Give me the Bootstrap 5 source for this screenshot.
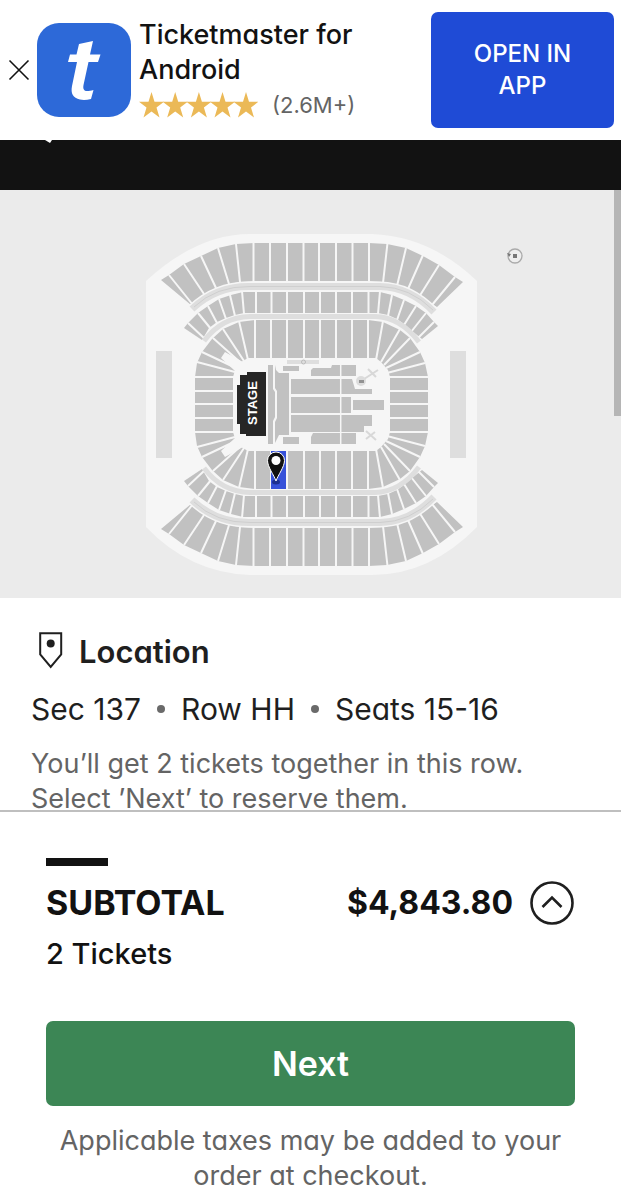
<!DOCTYPE html>
<html lang="en">
<head>
<meta charset="utf-8">
<meta name="viewport" content="width=device-width, initial-scale=1">
<title>Ticketmaster – Location</title>
<link href="https://cdn.jsdelivr.net/npm/bootstrap@5.3.0/dist/css/bootstrap.min.css" rel="stylesheet">
<style>
  body { font-family: Inter, "Open Sans", sans-serif; font-feature-settings: "cv11"; color: #121212; background: #fff; }
  .app-banner { height: 140px; padding: 11px 7px 12px 8px; }
  .close-btn { width: 22px; height: 22px; line-height: 0; }
  .app-icon { width: 94px; height: 94px; margin-left: 7px; }
  .app-name { font-size: 27px; line-height: 35px; font-weight: 500; }
  .rating { font-size: 22px; line-height: 36px; color: #646464; gap: 14px; }
  .open-btn { width: 183px; height: 116px; background: #1f4bd6; color: #fff; font-size: 24px; line-height: 32px; font-weight: 500; border-radius: 7px; padding: 0 32px; }
  .open-btn:hover { background: #1a40ba; color: #fff; }
  .top-bar { height: 50px; background: #121212; line-height: 0; }
  .top-bar svg { margin-left: 44px; }
  .seat-map { background: #ebebeb; }
  .scroll-thumb { width: 7px; height: 226px; background: #b5b5b5; }
  .details { padding: 33px 31px 0; }
  .details h1 { font-size: 31px; line-height: 42px; font-weight: 600; color: #1f1f1f; }
  .seat-line { font-size: 30px; line-height: 40px; color: #1f1f1f; margin-top: 16px; gap: 16px; }
  .dot { width: 8px; height: 8px; background: #6a6a6a; }
  .hint { font-size: 27px; line-height: 35px; color: #646464; }
  .details .hint { margin-top: 17px; }
  .checkout { border-top: 2px solid #bfbfbf; padding: 46px 46px 7px; margin-top: -10px; }
  .accent { width: 62px; height: 8px; background: #121212; }
  .total { font-size: 34px; line-height: 44px; font-weight: 700; margin-top: 15px; }
  .price { font-size: 32px; }
  .tickets { font-size: 29px; line-height: 36px; font-weight: 500; margin-top: 11px; }
  .next-btn { height: 85px; background: #3c8655; color: #fff; font-size: 34px; font-weight: 600; border-radius: 7px; margin-top: 49px; }
  .next-btn:hover { background: #32734a; color: #fff; }
  .checkout .hint { margin-top: 17px; }
</style>
</head>
<body>
<div class="d-flex flex-column vh-100 overflow-hidden">
  <header class="app-banner d-flex align-items-center flex-shrink-0">
    <button type="button" class="close-btn btn p-0 border-0 flex-shrink-0" aria-label="Close">
      <svg width="22" height="22" viewBox="0 0 22 22" fill="none" stroke="#121212" stroke-width="1.6"><path d="M1.500 1.500 20.500 20.500M20.500 1.500 1.500 20.500"/></svg>
    </button>
    <svg class="app-icon flex-shrink-0" viewBox="0 0 94 94" role="img" aria-label="Ticketmaster">
      <rect width="94" height="94" rx="22" fill="#2d69d8"/>
      <path fill="#fff" d="M42 21 56 18 53 31.500H63.500L61 39H51.500L46.500 62C45.700 66 47.200 68 50 68 52 68 54 67.700 56.500 67L54 76C50 77 46 77.300 43 76.500 36 75 33.500 70.500 35 63L40 39H31L33 31.500H39.500Z"/>
    </svg>
    <div class="flex-grow-1 ms-2">
      <div class="app-name">Ticketmaster for<br>Android</div>
      <div class="rating d-flex align-items-center">
        <svg width="119" height="26" viewBox="0 0 119 26" fill="#ebb957" role="img" aria-label="5 stars">
          <defs><path id="star" d="M12.500 0 15.500 9.700H25L17.500 15.500 20.500 25.500 12.500 19.500 4.500 25.500 7.500 15.500 0 9.700H9.500Z"/></defs>
          <use href="#star"/><use href="#star" x="23.700"/><use href="#star" x="47.400"/><use href="#star" x="71"/><use href="#star" x="94.500"/>
        </svg>
        <span>(2.6M+)</span>
      </div>
    </div>
    <button type="button" class="open-btn btn border-0 flex-shrink-0">OPEN IN APP</button>
  </header>

  <main class="flex-grow-1 overflow-hidden">
    <div class="top-bar">
      <svg width="10" height="4" viewBox="0 0 10 4"><path d="M1 0H8L6 3Z" fill="#fff"/></svg>
    </div>
    <div class="seat-map position-relative">
      <svg class="d-block w-100" viewBox="0 190 621 408" role="img" aria-label="Seating map, section 137">
        <path d="M146 281Q197 234 250 234H372Q430 236 477 281V527Q430 575 372 575H250Q190 573 146 527Z" fill="#f6f6f6"/>
        <path d="M156 351H172V458H156ZM450 351H466V458H450Z" fill="#dedede"/>
        <defs>
          <g id="half-bowl">
            <g fill="#c1c1c1">
              <path d="M161 280 169 275 184 264 201 256 218 248 236 244 254 243H369L387 244 406 248 423 256 439 265 455 277 463 282 437 307 432 304 419 296 408 288 397 285 383 282 369 281H254L240 282 229 284 216 288 204 294 191 305Z"/>
              <path d="M184 328 188 323 198 313 208 306 219 299 231 295 243 292H380L392 295 404 300 416 306 426 313 434 322 438 326 422 339 412 331 404 324 397 319 388 315 378 313H244L235 315 226 318 217 322 209 328 202 340Z"/>
              <path d="M195 405V377L197 363 202 352 212 339 223 329 239 322 255 320H368L383 322 400 330 410 338 420 352 425 363 428 377V405H390V377L388 370 381 362 376 358H248L241 362 236 367 233 377V405Z"/>
            </g>
            <path d="M225 352 243 362 235 371 221 358Z" fill="#f6f6f6"/>
            <path fill="none" stroke="#f6f6f6" stroke-width="2" d="M169 275 193 305M184 264 204 294M201 256 216 288M218 248 229 284M236 244 240 282M253.500 242V282M270 242V282M287 242V282M303.500 242V282M319 242V282M336 242V282M352.500 242V282M369 242V282M387.500 243 383 283M406 248 397 286M423 255 408 289M439 265 419 297M455 277 432 305
              M188 323 205 339M198 313 211 329M208 306 217 323M219 299 226 319M230 295 235 316M242 291 244 314M256 291V314M271.500 291V314M287 291V314M304 291V314M320 291V314M336 291V314M352 291V314M368.500 291V314M380 291 378 314M392 295 388 316M404 300 397 320M416 306 404 325M426 313 411 332M434 322 418 338
              M202 352 236 368M197 362 235 372M213 338 241 363M223 329 244 361M239 321 248 360M255 320V359M271 320V359M287 320V359M304 320V359M320 320V359M336 320V359M352 320V359M368 320V359M383 321 376 360M400 329 381 362M410 338 384 365M420 352 386 368M425 363 387 373M194 377H234M194 391H234M194 405H234M389 377H429M389 391H429M389 405H429"/>
            <g fill="none">
              <path stroke="#f6f6f6" stroke-width="10" d="M192 309Q216 286 250 286.500H380Q410 287 434 312"/>
              <path stroke="#dedede" stroke-width="7" d="M192 309Q216 286 250 286.500H380Q410 287 434 312"/>
              <path stroke="#dedede" stroke-width="5" d="M204 341Q222 317 250 316.500H375Q400 317 419 342"/>
              <path stroke="#cfcfcf" stroke-width="1" d="M194 307Q216 286 250 286.500H380Q410 287 433 310"/>
            </g>
          </g>
        </defs>
        <use href="#half-bowl"/>
        <use href="#half-bowl" transform="translate(0 809) scale(1 -1)"/>
        <g fill="#c1c1c1">
          <path d="M268 365H273V389L275 392V417L273 421V444H268ZM275 365 276 370 279 373H289V435H279L275 443V422L277 418V391L275 388Z"/>
          <path d="M283 366H299V371H283ZM283 437H299V444H283ZM311 370 313 368H331L332 365H356V376H311ZM311 437 313 433H356V444H311Z"/>
          <path d="M291 379H352L355 389H372V394H291ZM291 397H351V413H291ZM353 400H384V410H353ZM291 415H372V426H364V432H291Z"/>
        </g>
        <path d="M340.700 364V445" stroke="#f6f6f6" stroke-width="1.500"/>
        <path d="M287 360H319V364H287Z" fill="#dedede"/>
        <circle cx="303.500" cy="362" r="2" fill="none" stroke="#bbb"/>
        <path d="M361 381 378 370M368 369 376 377M366 431 376 440M375 432 366 439" stroke="#d8d8d8" stroke-width="2"/>
        <circle cx="361" cy="381" r="5" fill="#dcdcdc"/><path d="M359 380H364V383H359Z" fill="#929292"/>
        <path d="M247 372H266V436H246V434H240V424H237V385H240V375H247Z" fill="#262626"/>
        <text x="252" y="403" transform="rotate(-90 252 403)" text-anchor="middle" dominant-baseline="central" font-family="Liberation Sans, sans-serif" font-weight="700" font-size="13" fill="#fff">STAGE</text>
        <path d="M271 451H286V489H271Z" fill="#3651d9"/>
        <ellipse cx="276" cy="482" rx="4" ry="2.500" fill="#1c2f91"/>
        <path d="M276 481C274 475 267.500 467 267.500 460.500A8.500 8.500 0 0 1 284.500 460.500C284.500 467 278 475 276 481Z" fill="#111" stroke="#fff"/>
        <circle cx="276" cy="460.500" r="4.500" fill="#fff"/>
        <circle cx="515" cy="256" r="7" fill="#eee" stroke="#aaa" stroke-width="1.300"/>
        <path d="M507 253 511 254 509 257ZM513 254H517V258H513Z" fill="#777"/>
      </svg>
      <div class="scroll-thumb position-absolute top-0 end-0"></div>
    </div>
    <section class="details">
      <div class="d-flex align-items-start gap-3">
        <svg class="ms-2 flex-shrink-0" width="24" height="38" viewBox="0 0 24 38"><path d="M1.200 2.200H22.200V23.500L11.700 36 1.200 23.500Z" fill="none" stroke="#1f1f1f" stroke-width="2"/><circle cx="11.700" cy="12.500" r="4" fill="#1f1f1f"/></svg>
        <h1 class="mb-0">Location</h1>
      </div>
      <div class="seat-line d-flex align-items-center">
        <span>Sec 137</span><span class="dot rounded-circle"></span><span>Row HH</span><span class="dot rounded-circle"></span><span>Seats 15-16</span>
      </div>
      <p class="hint mb-0">You’ll get 2 tickets together in this row.<br>Select ’Next’ to reserve them.</p>
    </section>
  </main>

  <footer class="checkout flex-shrink-0">
    <div class="accent"></div>
    <div class="total d-flex align-items-center">
      <span>SUBTOTAL</span>
      <span class="price ms-auto me-3">$4,843.80</span>
      <button type="button" class="btn p-0 border-0 lh-1" aria-label="Show price details">
        <svg class="d-block" width="46" height="44" viewBox="0 0 46 44" fill="none" stroke="#1f1f1f"><circle cx="23" cy="22" r="20.500" stroke-width="2.600"/><path d="M13.500 26 23 16.500 32.500 26" stroke-width="2.600"/></svg>
      </button>
    </div>
    <div class="tickets">2 Tickets</div>
    <button type="button" class="next-btn btn w-100 border-0 p-0">Next</button>
    <p class="hint text-center mb-0">Applicable taxes may be added to your order at checkout.</p>
  </footer>
</div>
<script src="https://cdn.jsdelivr.net/npm/bootstrap@5.3.0/dist/js/bootstrap.bundle.min.js"></script>
</body>
</html>
